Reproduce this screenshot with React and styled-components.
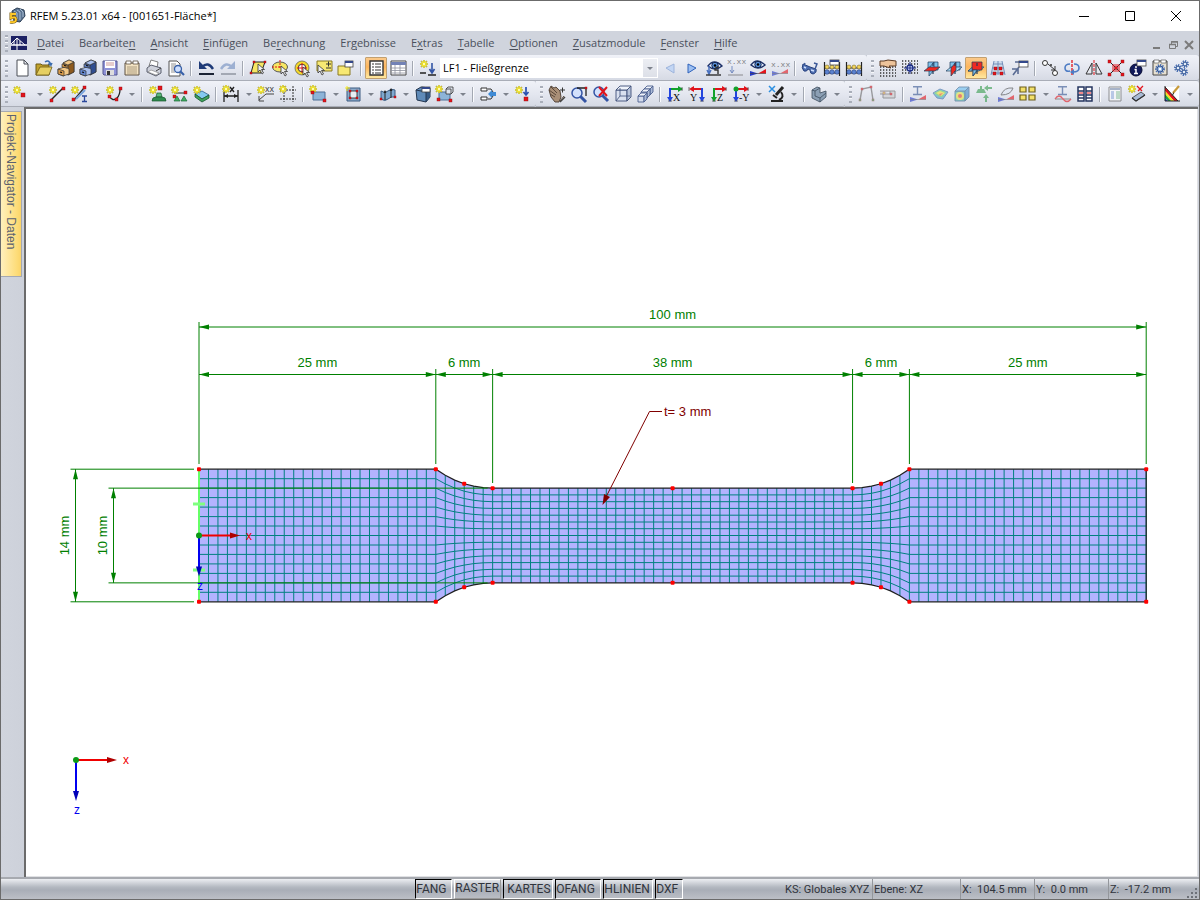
import React from 'react';
import styled, { createGlobalStyle } from 'styled-components';

const UI_FONT = '"Open Sans", "Noto Sans", sans-serif';
const DRAW_FONT = '"Liberation Sans", Arial, sans-serif';

const GlobalStyle = createGlobalStyle`
  * { box-sizing: border-box; }
  body { margin: 0; font-family: ${UI_FONT}; font-size: 11px; }
  button, select { font: inherit; color: inherit; margin: 0; }
`;

/* ---------- shell ---------- */

const Window = styled.div`
  display: flex;
  flex-direction: column;
  min-height: 100vh;
  border: 1px solid #6b6b6b;
  background: #d0d4dd;
  overflow: hidden;
`;

const TitleBar = styled.header`
  display: flex;
  align-items: center;
  height: 30px;
  padding-left: 8px;
  background: #fff;
  color: #000;
`;

const Title = styled.h1`
  flex: 1;
  margin: 0 0 0 5px;
  font-size: 11px;
  line-height: 16px;
  font-weight: 400;
`;

const CaptionButton = styled.button`
  display: grid;
  place-items: center;
  width: 46px;
  height: 30px;
  padding: 0;
  border: 0;
  background: none;
`;

const MenuBar = styled.nav`
  display: flex;
  align-items: center;
  height: 24px;
  padding: 0 2px 0 3px;
  background: #d0d4dd;
  color: #4a505c;
`;

const MenuList = styled.div`
  display: flex;
  flex: 1;
  margin-left: 3px;
`;

const MenuItem = styled.button`
  padding: 0 8px 0 7px;
  border: 0;
  background: none;
  line-height: 20px;
  white-space: nowrap;
  u { text-underline-offset: 2px; }
`;

const MdiButton = styled.button`
  display: grid;
  place-items: center;
  width: 16px;
  height: 20px;
  padding: 4px 0 0;
  border: 0;
  background: none;
`;

const Grip = styled.span`
  width: 3px;
  height: 17px;
  margin: 0 3px 0 1px;
  background: repeating-linear-gradient(#a9aeb9 0 2px, #f6f7fa 2px 3px, transparent 3px 5px);
`;

const ToolRow = styled.div`
  display: flex;
  height: 26px;
  background: #c6cad4;
`;

const ToolBar = styled.div`
  display: flex;
  align-items: center;
  flex: ${p => (p.$fill ? '1 0 auto' : '0 0 auto')};
  height: 26px;
  padding: 1px ${p => (p.$fill ? 0 : 2)}px 0 3px;
  background: linear-gradient(#f0f2f8, #e3e6ef 55%, #d6dae4);
  border-bottom: 1px solid #a9adb7;
  border-radius: 0 3px 3px 0;
`;

const ToolButton = styled.button`
  display: grid;
  place-items: center;
  width: 22px;
  height: 22px;
  padding: 0;
  border: 1px solid ${p => (p.$active ? '#c2a070' : 'transparent')};
  border-radius: 1px;
  background: ${p => (p.$active ? 'linear-gradient(#fbc98a, #fdb55c 45%, #ffe9a0)' : 'none')};
  opacity: ${p => (p.$dim ? 0.6 : 1)};
`;

const DropButton = styled.button`
  display: grid;
  place-items: center;
  width: 13px;
  height: 22px;
  padding: 0;
  border: 0;
  background: none;
`;

const Arrow = styled.span`
  border: 3px solid transparent;
  border-top-color: #7d828c;
  border-bottom: 0;
`;

const Separator = styled.span`
  width: 2px;
  height: 15px;
  margin: 0 3px;
  background: linear-gradient(90deg, #a3a8b2 50%, #fbfcfe 50%);
`;

const Combo = styled.label`
  display: flex;
  align-items: center;
  position: relative;
  width: 218px;
  height: 20px;
  margin: 0 1px;
  border: 1px solid #fff;
  background: #fff;
  color: #000;
`;

const ComboSelect = styled.select`
  flex: 1;
  height: 18px;
  padding: 0 2px 2px;
  border: 0;
  background: none;
  appearance: none;
`;

const ComboArrow = styled.span`
  position: absolute;
  right: 0;
  top: 0;
  display: grid;
  place-items: center;
  width: 14px;
  height: 18px;
  background: linear-gradient(#eceef3, #dde0e8);
  pointer-events: none;
`;

const Svg = styled.svg`
  display: block;
  overflow: visible;
  fill: none;
`;

const Main = styled.main`
  display: flex;
  flex: 1;
`;

const SideDock = styled.aside`
  width: 23px;
  padding-top: 4px;
  background: linear-gradient(90deg, #d0d4dd, #cdd1da);
`;

const SideTab = styled.button`
  width: 21px;
  height: 166px;
  padding: 2px 0 0;
  border: 1px solid #a5a9b2;
  border-left: 0;
  background: linear-gradient(90deg, #fff0bd, #fddc78 80%, #fbd468);
  color: #5b6170;
  font-family: ${DRAW_FONT};
  font-size: 12px;
  line-height: 18px;
  writing-mode: vertical-rl;
  text-align: left;
`;

const Canvas = styled.section`
  display: flex;
  flex: 1;
  border: solid #6b6b6b;
  border-width: 2px 0 0 2px;
  box-shadow: inset -1px -1px #e0e1e4;
  margin-right: 1px;
  background: #fff;
`;

const Drawing = styled.svg`
  flex: 1;
  width: 100%;
  font-family: ${DRAW_FONT};
  font-size: 13px;
`;

const StatusBar = styled.footer`
  display: flex;
  align-items: stretch;
  height: 22px;
  border-top: 2px solid #a7aab0;
  background: linear-gradient(#eceef2, #b4b9c1 40%, #a9aeb7 55%, #bcbfc6);
  color: #30343c;
  font-family: Roboto, sans-serif;
`;

const Spacer = styled.span`
  flex: ${p => p.$grow};
`;

const ModeButton = styled.button`
  width: ${p => p.$w}px;
  margin-right: 2px;
  padding: 0 0 ${p => (p.$pressed ? 0 : 2)}px ${p => (p.$center ? 1 : 0)}px;
  border: 1px solid;
  border-color: ${p => (p.$pressed ? '#000 #fff #fff #000' : '#fff #9a9a9a #9a9a9a #fff')};
  background: none;
  font-size: 12px;
  line-height: 17px;
  text-align: ${p => (p.$center ? 'center' : 'left')};
`;

const StatusCell = styled.span`
  width: ${p => p.$w}px;
  padding-left: 1px;
  border-right: 1px solid ${p => (p.$last ? 'transparent' : '#94979c')};
  font-size: 11px;
  line-height: 21px;
  white-space: pre;
`;

/* ---------- icon parts ---------- */

const Star = ({ x = 0, y = 0 }) => (
  <g transform={`translate(${x} ${y})`}>
    <path d="M4 0v8M0 4h8M1 1l6 6M7 1L1 7" stroke="#a39a3c" strokeWidth="1.5" />
    <path d="M4 0v8M0 4h8M1.5 1.5l5 5M6.5 1.5l-5 5" stroke="#f6e928" strokeWidth="1.1" />
    <rect x="3" y="3" width="2" height="2" fill="#fffbb0" />
  </g>
);
const Dot = ({ x, y, s = 3, c = '#e3141b' }) => (
  <rect x={x} y={y} width={s} height={s} fill={c} stroke="#8b0d12" strokeWidth=".4" />
);
const Pointer = ({ x = 0, y = 0 }) => (
  <path transform={`translate(${x} ${y})`} d="M0 0v8l2-2 2 4 1.5-1-2-3.5h3z" fill="#eee" stroke="#333" strokeWidth=".8" />
);
const Lens = ({ x = 5, y = 5, s = '#3454a4' }) => (
  <>
    <path d={`M${x + 3} ${y + 3}l6 6`} stroke={s} strokeWidth="3" />
    <circle cx={x} cy={y} r="5" fill="#cfe0ff" fillOpacity=".8" stroke={s} strokeWidth="1.5" />
  </>
);
const Cabinet = ({ a, b, c }) => (
  <g stroke="#333" strokeWidth=".7">
    <path d="M5 3l6-3 5 2v10l-6 3-5-2z" fill={a} />
    <path d="M10 5l6-3v10l-6 3z" fill={c} />
    <path d="M5 3l6-3 5 2-6 3z" fill={b} />
    <path d="M0 9l7-2 4 2v5l-6 2-5-2z" fill={b} />
    <path d="M0 9l6 2v5l-6-2zM4 4l5 1v3L4 7z" fill={a} />
    <path d="M2 12l2 .6M6 5.5l2 .4" stroke="#111" strokeWidth="1.2" />
  </g>
);
const Eye = ({ x = 0, y = 0 }) => (
  <g transform={`translate(${x} ${y})`}>
    <path d="M0 5q6-8 14 0-7 6-14 0z" fill="#e8f1ff" stroke="#1c2f66" strokeWidth="1.4" />
    <circle cx="7" cy="4.5" r="3.2" fill="#5b93dc" stroke="#14254f" />
    <circle cx="7" cy="4.5" r="1.3" fill="#000" />
  </g>
);
const Box = ({ x = 0, y = 0, s = 8, d = 4, f = '#7ea6cf', t = '#b7d2ec', r = '#45719f', k = '#2c4260' }) => (
  <g stroke={k} strokeWidth=".9" transform={`translate(${x} ${y})`}>
    <path d={`M0 ${d}h${s}v${s}h${-s}z`} fill={f} />
    <path d={`M0 ${d}l${d} ${-d}h${s}l${-d} ${d}z`} fill={t} />
    <path d={`M${s} ${d}l${d} ${-d}v${s}l${-d} ${d}z`} fill={r} />
  </g>
);
const Win = ({ x, y, w = 8, h = 6 }) => (
  <>
    <rect x={x} y={y} width={w} height={h} fill="#fff" stroke="#444" strokeWidth=".8" />
    <rect x={x} y={y} width={w} height="2" fill="#33488b" />
  </>
);
const Plus = ({ x, y }) => <path d={`M${x} ${y}h5M${x + 2.5} ${y - 2.5}v5`} stroke="#333" />;
const IBeam = ({ x = 3, y = 0, c = '#33538f' }) => (
  <path d={`M${x} ${y + .8}h9M${x + 4.5} ${y}v9M${x} ${y + 8.5}h9`} stroke={c} strokeWidth="1.4" />
);
const Axes = ({ flip, h, v, label }) => (
  <>
    <path d={flip ? 'M13 3H4' : 'M3 3h9'} stroke={h} strokeWidth="2" />
    <path d={flip ? 'M5 0L0 3l5 3z' : 'M11 0l5 3-5 3z'} fill={h} />
    <path d={flip ? 'M13 2v10' : 'M3 2v10'} stroke={v} strokeWidth="2" />
    <path d={flip ? 'M10 11h6l-3 5z' : 'M0 11h6l-3 5z'} fill={v} />
    <path d={flip ? 'M0 1v4M11 15h4' : 'M15 1v4M1 15h4'} stroke="#222" strokeWidth=".6" />
    <text x={flip ? 1 : 6} y="15" fontFamily="Liberation Serif, serif" fontSize="10" fill="#111">{label}</text>
  </>
);
const RED = '#ee2a22';
const Planes = ({ hot }) => {
  const flat = <path d="M0 11l5-4h11l-5 4z" fill={hot === 0 ? RED : '#a9dcf8'} />;
  const side = <path d="M5 8l5-6v8l-5 6z" fill={hot === 1 ? RED : '#7fc1ea'} />;
  const front = <path d="M4 2h10v8H4z" fill={hot === 2 ? RED : '#7fc1ea'} />;
  return (
    <g stroke="#1f3c5c" strokeWidth=".7">
      {hot === 2 ? <>{flat}{side}{front}</> : front}
      {hot === 0 && <>{side}{flat}</>}
      {hot === 1 && <>{flat}{side}</>}
      {hot === 2 && <path d="M0 11l4-3.5V11zM5 10h4l-4 6z" fill="#7fc1ea" />}
      <path d="M9 3v3M9 11v3" strokeWidth="1.2" />
    </g>
  );
};
const DotGrid = ({ y = 0 }) => (
  <path d={`M0 ${y + 1}h16M0 ${y + 4}h16M0 ${y + 7}h16M0 ${y + 10}h16M0 ${y + 13}h16`} stroke="#333" strokeWidth="1.3" strokeDasharray="1.3 1.7" />
);
const Gear = ({ x, y, r }) => (
  <>
    <circle cx={x} cy={y} r={r} stroke="#4d72b4" strokeWidth="2" strokeDasharray="1.3 1" />
    <circle cx={x} cy={y} r={r - 1} fill="#8fb2e0" stroke="#33538f" />
    <circle cx={x} cy={y} r={r / 3} fill="#fff" />
  </>
);
const Abacus = () => (
  <>
    <path d="M.5 2v14M15.5 2v14M0 8h15M0 13h15" stroke="#222" strokeWidth="1.2" />
    {[3, 8, 13].map(x => <circle key={x} cx={x} cy="7" r="2" fill="#f1d35a" stroke="#6b5a1d" strokeWidth=".5" />)}
    {[3, 8, 13].map(x => <circle key={x} cx={x} cy="12" r="2.3" fill="#5b82cf" stroke="#1d2f66" strokeWidth=".5" />)}
  </>
);
const Support = ({ x, y }) => <path d={`M${x} ${y}l3 5h-6z`} fill="#3fae62" stroke="#1d6b38" strokeWidth=".7" />;
const Values = ({ x = -1, y = 5 }) => (
  <text x={x} y={y} fontFamily="Liberation Mono, monospace" fontSize="8" fill="#333">x.xx</text>
);
const RedBlue = () => (
  <>
    <path d="M0 11v5l8-2.5z" fill="#2438c9" /><path d="M16 9v4.5H8z" fill="#e3141b" />
    <path d="M0 13.5h16" stroke="#444" strokeWidth=".6" />
  </>
);

const I = {
  new: <path d="M3 0h7l4 4v12H3zM10 0v4h4" fill="#fff" stroke="#4b4f57" />,
  open: <><path d="M9 2q4-3 6 3l1-2M15 5l-3-1" stroke="#3a6cae" strokeWidth="1.5" /><path d="M0 4h5l1 1h7v10H0z" fill="#c0a12c" stroke="#6d5b14" /><path d="M0 15l4-8h12l-3 8z" fill="#e6cf62" stroke="#6d5b14" strokeWidth=".8" /></>,
  cabA: <Cabinet a="#d99b4a" b="#f2c887" c="#8d5a1f" />,
  cabB: <Cabinet a="#6587cf" b="#a9c0ef" c="#304e91" />,
  save: <><path d="M1 1h14v14H2l-1-1z" fill="#8f93d8" stroke="#54568f" /><path d="M3 1h10v7H3z" fill="#fff" /><path d="M4 3h8M4 5h8" stroke="#c99" /><path d="M4 10h8v5H4z" fill="#ddd" /><path d="M5 11h3v4H5z" fill="#333" /></>,
  notes: <><path d="M1 3h14v12H1z" fill="#f3e3c3" stroke="#5d5142" /><path d="M2 1h5v3H2zM9 1h5v3H9z" fill="#fff" stroke="#5d5142" strokeWidth=".8" /><path d="M3 7h10M3 9h10M3 11h10M3 13h10" stroke="#9a8b70" strokeWidth=".8" /></>,
  print: <><path d="M3 6L5 0l7 2-1 6z" fill="#fff" stroke="#666" strokeWidth=".8" /><path d="M1 8l4-3 10 3v5l-5 3-9-4z" fill="#cfd2dc" stroke="#4d5160" strokeWidth=".9" /><path d="M2 12l3-2 8 3-3 2z" fill="#fff" stroke="#777" strokeWidth=".6" /><path d="M10 11l5-3" stroke="#444" /></>,
  preview: <><path d="M1 1h8l3 3v12H1z" fill="#fff" stroke="#555" /><path d="M3 4h5M3 6h6M3 8h4M3 10h3M3 12h4" stroke="#777" strokeWidth=".8" /><circle cx="10" cy="9" r="3.5" fill="#cfe0ff" stroke="#3860a8" strokeWidth="1.3" /><path d="M12 11l4 4" stroke="#3860a8" strokeWidth="2.2" /></>,
  undo: <><path d="M1 1v8h8z" fill="#1e3a78" /><path d="M4 7q6-6 11 2" stroke="#1e3a78" strokeWidth="2.4" /><path d="M1 14h15" stroke="#1b2334" strokeWidth="2" /></>,
  redo: <><path d="M15 1v8H7z" fill="#9db0d2" /><path d="M12 7Q6 1 1 9" stroke="#9db0d2" strokeWidth="2.4" /><path d="M1 14h15" stroke="#a3a8b3" strokeWidth="2" /></>,
  selPoly: <><path d="M4 2h11l-4 11H1z" fill="#f6e663" stroke="#222" /><Dot x="3" y="1" s={2} /><Dot x="14" y="1" s={2} /><Dot x="0" y="12" s={2} /><Pointer x={8} y={4} /></>,
  selEll: <><ellipse cx="8" cy="7" rx="7.5" ry="5" fill="#f6e663" stroke="#555" /><path d="M8 0v9M0 7h8" stroke="#e3141b" strokeDasharray="2 1" /><Pointer x={9} y={6} /></>,
  selRing: <><circle cx="8" cy="8" r="7" fill="#f4d82a" stroke="#555" strokeWidth=".7" /><circle cx="8" cy="8" r="3.8" fill="#fff" stroke="#333" /><path d="M8 3v10M3 8h10" stroke="#e3141b" /><Pointer x={9} y={7} /></>,
  selPlus: <><path d="M1 1h15v10H1z" fill="#f7e873" stroke="#8a7a22" /><Plus x={10} y={4} /><path d="M10 8h5" stroke="#333" /><Pointer x={2} y={5} /></>,
  selWin: <><path d="M0 6h12v9H0z" fill="#f7e873" stroke="#8a7a22" /><Win x={7} y={1} w={8} h={6} /></>,
  table: <><path d="M2 1h13v14H2z" fill="#fff" stroke="#333" strokeWidth="1.4" /><path d="M4 4h2M4 7h2M4 10h2M4 13h2M7 4h6M7 7h6M7 10h6M7 13h6" stroke="#333" /></>,
  grid: <><path d="M1 1h15v14H1z" fill="#fff" stroke="#444" /><path d="M1 2h15v3H1z" fill="#7382b5" /><path d="M1 8h15M1 10.5h15M1 13h15M5 5v10M10 5v10" stroke="#8d919d" strokeWidth=".8" /></>,
  loadNew: <><Star /><path d="M12 3v9M9.5 9l2.5 4 2.5-4" stroke="#3154a5" strokeWidth="1.6" /><path d="M0 13h6M8 15h8" stroke="#222" strokeWidth="1.6" /></>,
  prev: <path d="M12 4v9L4 8z" fill="#c3d6f4" stroke="#9db4dc" />,
  next: <path d="M4 4v9l8-5z" fill="#9dc0f2" stroke="#2f62bb" />,
  eyeLoad: <><Eye x={2} y={1} /><path d="M3 6v7M1 10l2 4 2-4" stroke="#4a72c0" strokeWidth="1.5" /><path d="M0 15h15" stroke="#222" strokeWidth="1.3" /><path d="M13 7q-4 0-4 3h3v4" stroke="#333" strokeWidth="1.4" /></>,
  valLoad: <><Values y={4} /><path d="M4 6v7M2 10l2 3 2-3" stroke="#3154a5" /><path d="M0 15h15" stroke="#555" /></>,
  eyeRes: <><RedBlue /><Eye x={1} /></>,
  valRes: <><RedBlue /><Values y={7} /></>,
  glasses: <><path d="M1 4q-2 4 1 7 3 1 4-2l2 1q0 4 3 4 4-1 3-5L8 7z" fill="#4d6db0" stroke="#26407c" /><path d="M2 5l1-2M13 9l2-5-3-1" stroke="#3b5898" strokeWidth="1.5" /><path d="M2 7l2 1M9 10l3 1" stroke="#cfe0ff" strokeWidth="1.4" /></>,
  abacusWin: <><Abacus /><Win x={6} y={0} w={9} h={5} /></>,
  abacus: <Abacus />,
  handGrid: <><DotGrid y={3} /><path d="M0 1h4l4-1 8 1v5H9l2 2-4-1-3-1H0z" fill="#edc39a" stroke="#5b3a24" /></>,
  snapGrid: <><DotGrid /><circle cx="8" cy="8" r="3" fill="#cfdcff" stroke="#1a2b84" strokeWidth="1.3" /><path d="M8 2v12M2 8h12" stroke="#1a2b84" /></>,
  plane0: <Planes hot={0} />,
  plane1: <Planes hot={1} />,
  plane2: <Planes hot={2} />,
  lattice: <><path d="M4 1h8l3 14H1z" fill="#cfdcec" /><path d="M4 1L1 15M8 1v14M12 1l3 14M3 4h10M2 8h12M1 13h14" stroke="#6b89b5" strokeWidth=".9" /><Dot x="4" y="7" /><Dot x="9" y="7" /><Dot x="3" y="12" /><Dot x="10" y="12" /></>,
  tag: <><path d="M1 15l6-8M0 9h6v5M3 2h5v5" stroke="#5a6c94" strokeWidth="1.6" /><Win x={7} y={1} w={9} h={6} /></>,
  move: <><circle cx="3" cy="3" r="2.5" stroke="#333" fill="#fff" /><circle cx="9" cy="5" r="1" fill="#333" /><path d="M6 4l7 6M13 6v4h-4" stroke="#333" /><circle cx="13" cy="13" r="2.5" stroke="#333" fill="#fff" /></>,
  rotate: <><path d="M8 0v16" stroke="#e3141b" strokeDasharray="3 1" strokeWidth="1.3" /><path d="M6 4Q1 4 1 8t5 3M10 4q5 0 5 4t-6 4" stroke="#4d7cc4" strokeWidth="1.6" /><path d="M10 9v6l-4-3z" fill="#4d7cc4" /></>,
  mirror: <><path d="M8 0v16" stroke="#e3141b" strokeDasharray="3 1" /><path d="M6 3v11H0zM10 3v11h6z" stroke="#333" fill="#e5e8ef" /></>,
  explode: <><path d="M1 1l14 14M15 1L1 15" stroke="#222" /><path d="M5 5h6v6H5z" stroke="#e3141b" /><Dot x="0" y="0" /><Dot x="13" y="0" /><Dot x="0" y="13" /><Dot x="13" y="13" /><Dot x="6.5" y="6.5" /></>,
  info: <><circle cx="6" cy="10" r="6" fill="#101a5b" stroke="#070b33" /><path d="M6 6v2M4.5 9.5H6V13M4 13.5h4" stroke="#fff" strokeWidth="1.5" /><Win x={7} y={0} w={9} h={6} /></>,
  options: <><path d="M1 1h14v14H1z" fill="#e8e1d1" stroke="#444" /><path d="M2 0h5v3H2zM9 0h5v3H9z" fill="#fff" stroke="#444" strokeWidth=".6" /><Gear x={8} y={9} r={4} /></>,
  gears: <><Gear x={4} y={8} r={3} /><Gear x={11} y={4} r={3} /><Gear x={10} y={12} r={3} /></>,

  nNode: <><Star x={-1} y={0} /><Dot x="7" y="7" s={4} /></>,
  nLine: <><path d="M2 14L14 2" stroke="#222" strokeWidth="1.4" /><Star /><Dot x="13" y="1" /><Dot x="1" y="13" /></>,
  nMember: <><path d="M3 14L13 2" stroke="#222" strokeWidth="1.2" /><path d="M5 13l9-9" stroke="#78a3dc" strokeWidth="2.2" /><Star /><Dot x="12" y="0" /><Dot x="1" y="12" /><path d="M11 10h5M13.5 10v6M11 15.5h5" stroke="#2b489b" strokeWidth="1.3" /></>,
  nArc: <><path d="M3 10q4 6 8 2 3-3 3-9" stroke="#222" strokeWidth="1.3" /><Star /><Dot x="13" y="1" /><Dot x="2" y="9" /><Dot x="9" y="12" /></>,
  nSupport: <><Star /><Dot x="9" y="0" s={4} /><path d="M8 7h4l1 4H7z" fill="#5cbb7c" stroke="#17562c" strokeWidth=".7" /><path d="M3 15q0-4 4-4h6q4 0 4 4z" fill="#2f8c4e" stroke="#17562c" strokeWidth=".7" /></>,
  nLSupport: <><path d="M3 7h11" stroke="#222" /><Star /><Dot x="13" y="5" /><Dot x="2" y="9" /><Support x={6} y={10} /><Support x={13} y={10} /></>,
  nSSupport: <><path d="M2 8l7-3 7 4-7 4z" fill="#84c9ef" stroke="#2f6187" strokeWidth=".8" /><path d="M2 8l7 5 7-4v3l-7 4-7-5z" fill="#3fa25c" stroke="#17562c" strokeWidth=".8" /><Star /></>,
  nDim: <><path d="M1 4v12M15 4v12M1 10h14" stroke="#222" strokeWidth="1.3" /><path d="M1 10l4-2v4zM15 10l-4-2v4z" fill="#222" /><path d="M7 1l4 5M11 1L7 6" stroke="#222" strokeWidth="1.4" /><Star x={-1} y={-1} /></>,
  nText: <><Star x={-1} /><text x="7" y="6" fontFamily="Liberation Sans, sans-serif" fontSize="9" fill="#444">xx</text><path d="M16 8H8l-7 6M1 10v5h5" stroke="#444" /></>,
  nRaster: <><path d="M4 0v16M13 0v16M0 4h16M0 13h16" stroke="#333" strokeDasharray="2 1" /><Star x={-1} y={-1} /></>,
  nSurf: <><path d="M3 6h12v8H3z" fill="#8db4d8" stroke="#4d6e95" /><Star x={-1} y={-1} /><Dot x="1" y="5" /><Dot x="13" y="13" /></>,
  nOpening: <><path d="M2 2h13v13H2z" fill="#8cadcd" stroke="#3c5b80" /><path d="M5 5h7v7H5z" fill="#e9edf5" stroke="#222" strokeWidth=".8" /><path d="M2 0v5M0 2h5" stroke="#f6e928" /><Dot x="4" y="4" s={2} /><Dot x="11" y="4" s={2} /><Dot x="4" y="11" s={2} /><Dot x="11" y="11" s={2} /></>,
  nShell: <><path d="M1 5q4 3 7 0t7-1v7q-4-1-7 2t-7 0z" fill="#7fa9d0" stroke="#3c5b80" /><path d="M5 5v9M11 3v9" stroke="#222" /><path d="M3.5 7L5 4l1.5 3M9.5 5L11 2l1.5 3" fill="#222" /><Dot x="0" y="12" s={2} /><Dot x="14" y="10" s={2} /></>,
  solidWin: <><path d="M1 4l5-3 9 1v9l-4 5-9-2z" fill="#5f8ab8" stroke="#22354f" /><path d="M11 6l4-4v9l-4 5z" fill="#365a85" /><path d="M1 4l10 2v10" stroke="#22354f" /><Win x={7} y={1} w={8} h={5} /></>,
  nSolid: <><path d="M2 6h11v8H2z" fill="#8db4d8" stroke="#4d6e95" /><path d="M9 3l2-2h5v5l-2 2M9 3h5v5H9z" fill="#dfe5ee" stroke="#333" strokeWidth=".8" /><Star x={-2} y={-1} /><Dot x="0" y="12" /><Dot x="12" y="13" /></>,
  link: <><path d="M1 2h6v3H1zM1 11h6v3H1z" fill="#fff" stroke="#333" /><path d="M8 3h3l2 3M8 13h3l2-3" stroke="#333" /><path d="M8 8l4-4v2h4v4h-4v2z" fill="#3f8ad4" /></>,
  nLoad: <><Star /><path d="M11 1v7M8.5 6l2.5 3 2.5-3" stroke="#2b51b0" strokeWidth="1.7" /><Dot x="9" y="11" s={4} /></>,
  hand: <><path d="M2 0l3 2 2-1 4 4 1 6-2 5H6L2 11 0 4z" fill="#a98f77" stroke="#4a3b30" strokeWidth=".9" /><path d="M2 1l6 6M0 4l7 5M1 8l5 3M11 15l4-5" stroke="#5b493a" /><Plus x={11} y={4} /><path d="M11 16l5-5" stroke="#444" strokeWidth="1.5" /></>,
  zoomWin: <><Lens x={6} y={7} /><path d="M6 2h9v8" stroke="#222" strokeWidth="1.3" /><Dot x="14" y="1" s={2} /></>,
  zoomAll: <><Lens x={6} y={6} /><path d="M6 1l8 9M14 1L6 10" stroke="#e3141b" strokeWidth="2" /></>,
  cube: <><Box x={1} y={0} s={11} d={4} f="#d9e0ef" t="#eff3fa" r="#b7c3da" k="#3e4f78" /><path d="M5 2v8l-4 5M5 10h10" stroke="#3e4f78" strokeWidth=".8" /></>,
  cubes: <><Box x={7} y={0} s={6} d={3} f="#d5dded" t="#eff3fa" r="#aab9d6" k="#4d6090" /><Box x={4} y={3} s={6} d={3} f="#d5dded" t="#eff3fa" r="#aab9d6" k="#4d6090" /><Box x={1} y={7} s={6} d={3} f="#d5dded" t="#eff3fa" r="#aab9d6" k="#4d6090" /></>,
  vX: <Axes h="#12a22b" v="#2244dd" label="X" />,
  vY: <Axes flip h="#e0131b" v="#2244dd" label="Y" />,
  vZ: <Axes h="#e0131b" v="#12a22b" label="Z" />,
  vmY: <><Axes h="#e0131b" v="#2244dd" label="-Y" /><circle cx="3" cy="3" r="2.5" fill="#12a22b" /></>,
  scope: <><path d="M15 1L8 9" stroke="#222" strokeWidth="3" /><path d="M13 6q4 5-2 8M5 9l4 3" stroke="#222" strokeWidth="2" /><path d="M3 15h12" stroke="#222" strokeWidth="2" /><path d="M1 0l6 6M7 0L1 6" stroke="#2c8fe0" strokeWidth="1.5" /></>,
  solid: <><path d="M1 4l5-3 3 1v5l6-2v6l-6 5-8-4z" fill="#8b9fb4" stroke="#3c4b5c" strokeWidth=".8" /><path d="M4 5v5l5 2 6-5M4 5l5-3M9 12v4M1 4l3 1" stroke="#3c4b5c" strokeWidth=".8" /></>,
  frame: <><path d="M2 14L4 3l9-2 2 13" stroke="#666" strokeWidth="1.4" /><Dot x="3" y="2" s={2} /><Dot x="12" y="0" s={2} /><Dot x="1" y="13" s={2} c="#3a5" /><Dot x="14" y="13" s={2} c="#3a5" /></>,
  release: <><path d="M0 5h10v3H0M3 8v4h12V5h-5" fill="#ccc" stroke="#666" /><Dot x="10" y="7" s={2} /><Dot x="3" y="6" s={2} c="#dd4" /></>,
  resBeam: <><RedBlue /><IBeam /></>,
  resSurf: <><path d="M1 7l7-4 8 3-5 7-6-1z" fill="#43a8c4" stroke="#3b6aa5" /><path d="M2 7l6-3 6 2-4 5-4-1z" fill="#5fd05a" /><path d="M4 7l4-2 5 2-4 3z" fill="#f3dc2f" /><path d="M7 8l4-1-3 3z" fill="#ea4b2a" /></>,
  resSolid: <><Box x={1} y={1} s={10} d={4} f="#4cc0a5" t="#67bdf0" r="#3b86c4" k="#2d5a85" /><circle cx="6" cy="10" r="4" fill="#e8e13a" /><circle cx="6" cy="10" r="2" fill="#ea3b2a" /></>,
  react: <><path d="M4 0h2v3h2l2 4H0l2-4h2z" fill="#349b4b" /><path d="M8 2l4-3v2h4v2h-4v2zM9 16v-4H7l3-4 3 4h-2v4z" fill="#349b4b" /></>,
  section: <><RedBlue /><path d="M3 9q3-8 12-7-2 7-12 7z" fill="#dfe7f4" stroke="#444" /></>,
  panels: <>{[[0, 1], [9, 1], [0, 9], [9, 9]].map(([x, y]) => <path key={`${x}${y}`} d={`M${x} ${y}h6v5h-6z`} fill="#f3e069" stroke="#6d5f1d" strokeWidth="1.2" />)}</>,
  beamWave: <><IBeam x={3} y={0} /><path d="M0 13h16" stroke="#555" /><path d="M0 13q4-6 8 0 4 5 8 0" stroke="#e3141b" strokeWidth="1.3" /></>,
  resTable: <><path d="M1 1h6v14H1zM9 1h6v14H9z" fill="#fff" stroke="#25345f" strokeWidth="1.5" /><path d="M1 5h6M1 9h6M1 12h6M9 5h6M9 9h6M9 12h6" stroke="#25345f" strokeWidth="1.3" /><path d="M2 7h4M10 7h4" stroke="#e3141b" /></>,
  report: <><path d="M2 1h12v14H2z" fill="#fff" stroke="#555" /><path d="M3 2h10v2H3z" fill="#7d8fae" /><path d="M4 6h3M4 8h3M4 10h3M4 12h3" stroke="#3b6ac4" /><path d="M9 6h4M9 8h4M9 10h4M9 12h4" stroke="#49a35b" /></>,
  wizard: <><path d="M3 12l9-6 4 3-9 6z" fill="#a9bbd6" stroke="#333" strokeWidth=".8" /><path d="M3 12l4 3 9-6" stroke="#333" strokeWidth="1.2" /><path d="M8 0l5 5M14 0L9 5" stroke="#e3141b" strokeWidth="1.3" /><Star x={-1} y={-1} /></>,
  colors: <><path d="M1 1h14v14H1z" fill="#fff" /><path d="M1 1l13 14h-4L1 5z" fill="#e3141b" /><path d="M1 5l9 10H7L1 8z" fill="#f4e11f" /><path d="M1 8l6 7H4l-3-3z" fill="#1aa83a" /><path d="M1 12l3 3H1z" fill="#1d3fd6" /><path d="M1 0v15h15M1 1l13 14" stroke="#222" /><path d="M15 0L9 7" stroke="#c79a3a" strokeWidth="2.2" /><path d="M10 6l-3 4 3-2z" fill="#333" /></>,
};

/* ---------- toolbars ---------- */

const T = (id, opt = {}) => ({ id, ...opt });
const SEP = { sep: true };
const drop = { drop: true };
const dim = { dim: true };

const row1 = [
  ['new', 'open', 'cabA', 'cabB', 'save', 'notes', 'print', 'preview', SEP, 'undo', 'redo', SEP, 'selPoly', 'selEll', 'selRing', 'selPlus', 'selWin', SEP,
    T('table', { active: true }), 'grid', SEP, 'loadNew', { combo: true }, 'prev', 'next', 'eyeLoad', T('valLoad', dim), 'eyeRes', T('valRes', dim), SEP, 'glasses', 'abacusWin', 'abacus'],
  ['handGrid', 'snapGrid', 'plane0', 'plane1', T('plane2', { active: true }), 'lattice', 'tag', SEP, 'move', 'rotate', 'mirror', 'explode', 'info', 'options', 'gears'],
];
const row2 = [
  [T('nNode', drop), 'nLine', T('nMember', drop), T('nArc', drop), SEP, 'nSupport', 'nLSupport', 'nSSupport', SEP, T('nDim', drop), 'nText', 'nRaster', SEP,
    T('nSurf', drop), T('nOpening', drop), T('nShell', drop), 'solidWin', T('nSolid', drop), SEP, T('link', drop), 'nLoad'],
  ['hand', 'zoomWin', 'zoomAll', 'cube', 'cubes', SEP, 'vX', 'vY', 'vZ', T('vmY', drop), T('scope', drop), SEP, T('solid', drop)],
  [T('frame', dim), T('release', dim), SEP, T('resBeam', dim), T('resSurf', dim), T('resSolid', dim), T('react', dim), T('section', dim), T('panels', drop),
    T('beamWave', dim), 'resTable', SEP, T('report', dim), T('wizard', drop), T('colors', drop)],
];

function Tool({ item }) {
  const it = typeof item === 'string' ? { id: item } : item;
  if (it.sep) return <Separator />;
  if (it.combo) {
    return (
      <Combo>
        <ComboSelect aria-label="Lastfall"><option>LF1 - Fließgrenze</option></ComboSelect>
        <ComboArrow><Arrow /></ComboArrow>
      </Combo>
    );
  }
  return (
    <>
      <ToolButton type="button" aria-label={it.id} $active={it.active} $dim={it.dim}>
        <Svg width="16" height="16" viewBox="0 0 16 16">{I[it.id]}</Svg>
      </ToolButton>
      {it.drop && <DropButton type="button" aria-label={`${it.id} Auswahl`}><Arrow /></DropButton>}
    </>
  );
}

const Bars = ({ bars }) => (
  <ToolRow>
    {bars.map((items, i) => (
      <ToolBar key={i} $fill={i === bars.length - 1}>
        <Grip />
        {items.map((item, k) => <Tool key={k} item={item} />)}
      </ToolBar>
    ))}
  </ToolRow>
);

/* ---------- model drawing ---------- */

const MM = 9.472;
const X0 = 199;
const YC = 535.5;
const GREEN = '#008000';
const px = mm => X0 + mm * MM;

// half height of the specimen at a position along its length
const halfHeight = mm => {
  const d = mm > 50 ? 100 - mm : mm;
  if (d <= 25) return 7;
  if (d >= 31) return 5;
  const u = (31 - d) / 6;
  return 5 + 2 * (0.85 * u * u + 0.15 * u * u * u);
};
const py = (mm, k) => YC + k * (halfHeight(mm) / 7) * MM;

const stations = Array.from({ length: 101 }, (_, i) => i);
const isoLine = k => 'M' + stations.map(s => `${px(s).toFixed(1)} ${py(s, k).toFixed(1)}`).join('L');
const outline = `${isoLine(-7)}L${stations.slice().reverse().map(s => `${px(s).toFixed(1)} ${py(s, 7).toFixed(1)}`).join('L')}Z`;

function HDim({ a, b, y, label }) {
  const x1 = px(a);
  const x2 = px(b);
  return (
    <g>
      <path d={`M${x1} ${y}H${x2}`} stroke={GREEN} />
      <path d={`M${x1} ${y}l10-2.5v5zM${x2} ${y}l-10-2.5v5z`} fill={GREEN} />
      <text x={(x1 + x2) / 2} y={y - 8} textAnchor="middle" fill={GREEN}>{label}</text>
    </g>
  );
}

function VDim({ half, x, end, label }) {
  const y1 = YC - half * MM;
  const y2 = YC + half * MM;
  return (
    <g>
      <path d={`M${x - 5} ${y1}H${end}M${x - 5} ${y2}H${end}M${x} ${y1}V${y2}`} stroke={GREEN} />
      <path d={`M${x} ${y1}l-2.5 10h5zM${x} ${y2}l-2.5-10h5z`} fill={GREEN} />
      <text transform={`translate(${x - 7} ${YC}) rotate(-90)`} textAnchor="middle" fill={GREEN}>{label}</text>
    </g>
  );
}

function AxisCross({ x, y }) {
  return (
    <g fontSize="12">
      <path d={`M${x} ${y}h32`} stroke="#f00000" strokeWidth="2" />
      <path d={`M${x + 41} ${y}l-10-3v6z`} fill="#b00000" />
      <path d={`M${x} ${y}v32`} stroke="#0000f0" strokeWidth="2" />
      <path d={`M${x} ${y + 41}l-3-10h6z`} fill="#0000b8" />
      <circle cx={x} cy={y} r="3" fill="#0c9a16" />
      <text x={x + 50} y={y + 4} textAnchor="middle" fill="#f00000">x</text>
      <text x={x + 1} y={y + 54} textAnchor="middle" fill="#0000f0">z</text>
    </g>
  );
}

function Model() {
  const nodes = [0, 25, 28, 31, 50, 69, 72, 75, 100];
  return (
    <Drawing viewBox="26 109 1172 768" fill="none" role="img" aria-label="Flächenmodell mit Bemaßung">
      <path d={outline} fill="#b3b3ff" />
      <path d={stations.map(s => `M${px(s)} ${py(s, -7)}V${py(s, 7)}`).join('')} stroke="#008080" />
      {Array.from({ length: 13 }, (_, i) => <path key={i} d={isoLine(i - 6)} stroke="#008080" />)}
      <path d={outline} stroke="#202020" strokeWidth="1.2" />
      <path d={`M${X0} ${py(0, -7)}V${py(0, 7)}`} stroke="#66ff66" strokeWidth="2" />
      <path d={`M${X0 - 6} 504h12M${X0 - 6} 570h12`} stroke="#80ff80" strokeWidth="3" />

      <path d={`M${px(0)} 322V464M${px(100)} 322V464M${px(25)} 369V464M${px(75)} 369V464M${px(31)} 369V483M${px(69)} 369V483`} stroke={GREEN} />
      <HDim a={0} b={100} y={327} label="100 mm" />
      <HDim a={0} b={25} y={374.5} label="25 mm" />
      <HDim a={25} b={31} y={374.5} label="6 mm" />
      <HDim a={31} b={69} y={374.5} label="38 mm" />
      <HDim a={69} b={75} y={374.5} label="6 mm" />
      <HDim a={75} b={100} y={374.5} label="25 mm" />
      <VDim half={7} x={75.5} end={194} label="14 mm" />
      <VDim half={5} x={113.5} end={px(31) - 5} label="10 mm" />

      <path d="M662 411.5H649.5L606 497" stroke="#800000" />
      <path d="M602.5 505l1.5-11 6 3z" fill="#800000" />
      <text x="664" y="416" fill="#800000">t= 3 mm</text>

      {nodes.map(n => [-7, 7].map(k => (
        <rect key={`${n}${k}`} x={px(n) - 2} y={py(n, k) - 2} width="4" height="4" rx="1" fill="#ff0000" />
      )))}
      <AxisCross x={X0} y={YC} />
      <AxisCross x={76} y={760} />
    </Drawing>
  );
}

/* ---------- page ---------- */

const menus = [['', 'D', 'atei'], ['Bearbeite', 'n', ''], ['', 'A', 'nsicht'], ['', 'E', 'infügen'], ['Be', 'r', 'echnung'], ['Er', 'g', 'ebnisse'],
  ['E', 'x', 'tras'], ['', 'T', 'abelle'], ['', 'O', 'ptionen'], ['', 'Z', 'usatzmodule'], ['', 'F', 'enster'], ['', 'H', 'ilfe']];

const modes = [['FANG', 37, 1], ['RASTER', 47, 0], ['KARTES', 50, 1, 1], ['OFANG', 46, 1], ['HLINIEN', 50, 1], ['DXF', 28, 1]];
const cells = [['KS: Globales XYZ', 89], ['Ebene: XZ', 88], ['X:  104.5 mm', 74], ['Y:  0.0 mm', 74], ['Z:  -17.2 mm', 76]];

export default function App() {
  return (
    <>
      <GlobalStyle />
      <Window>
        <TitleBar>
          <Svg width="16" height="16" viewBox="0 0 16 16">
            <path d="M3 3l5-3 7 2 1 6-5 6-6-1z" fill="#5a7391" stroke="#2c3e55" />
            <path d="M5 3l3 2v6M8 2l3 2v8M11 1l3 3v5" stroke="#a9bdd2" />
            <path d="M7 6H2v4q5-2 5 1.5T1 14" stroke="#7d5f10" strokeWidth="3" />
            <path d="M7 6H2v4q5-2 5 1.5T1 14" stroke="#ffc928" strokeWidth="1.8" />
          </Svg>
          <Title>RFEM 5.23.01 x64 - [001651-Fläche*]</Title>
          <CaptionButton type="button" aria-label="Minimieren"><Svg width="10" height="10"><path d="M0 5.5h10" stroke="#000" /></Svg></CaptionButton>
          <CaptionButton type="button" aria-label="Maximieren"><Svg width="10" height="10"><path d="M.5.5h9v9h-9z" stroke="#000" /></Svg></CaptionButton>
          <CaptionButton type="button" aria-label="Schließen"><Svg width="10" height="10"><path d="M0 0l10 10M10 0L0 10" stroke="#000" /></Svg></CaptionButton>
        </TitleBar>

        <MenuBar>
          <Grip />
          <Svg width="16" height="14" viewBox="0 0 16 14">
            <path d="M0 0h16v14H0z" fill="#1c2163" />
            <path d="M0 9h16" stroke="#fff" strokeWidth="1.5" />
            <path d="M6 2v12M0 8l6-6 8 7M9 5v4M3 5v4" stroke="#fff" />
          </Svg>
          <MenuList>
            {menus.map(([a, u, b]) => <MenuItem key={a + u + b} type="button">{a}<u>{u}</u>{b}</MenuItem>)}
          </MenuList>
          <MdiButton type="button" aria-label="Dokument minimieren"><Svg width="8" height="8"><path d="M0 7h7" stroke="#7b7b7b" strokeWidth="2" /></Svg></MdiButton>
          <MdiButton type="button" aria-label="Dokument wiederherstellen"><Svg width="9" height="8"><path d="M2.5 3V.5h6v5H7M.5 3.5h6v4h-6z" stroke="#7b7b7b" /><path d="M2 1h7M0 3.5h7" stroke="#7b7b7b" strokeWidth="1.5" /></Svg></MdiButton>
          <MdiButton type="button" aria-label="Dokument schließen"><Svg width="8" height="8"><path d="M0 0l8 8M8 0L0 8" stroke="#7b7b7b" strokeWidth="2" /></Svg></MdiButton>
        </MenuBar>

        <Bars bars={row1} />
        <Bars bars={row2} />

        <Main>
          <SideDock><SideTab type="button">Projekt-Navigator - Daten</SideTab></SideDock>
          <Canvas><Model /></Canvas>
        </Main>

        <StatusBar>
          <Spacer $grow={21} />
          {modes.map(([label, w, pressed, center]) => (
            <ModeButton key={label} type="button" $w={w} $pressed={pressed} $center={center}>{label}</ModeButton>
          ))}
          <Spacer $grow={5} />
          {cells.map(([label, w], i) => <StatusCell key={label} $w={w} $last={i === cells.length - 1}>{label}</StatusCell>)}
          <Svg width="14" height="20" viewBox="0 0 14 20">
            <path d="M10 9h2v2h-2zM6 13h2v2H6zM10 13h2v2h-2zM2 17h2v2H2zM6 17h2v2H6zM10 17h2v2h-2z" fill="#6d7178" />
          </Svg>
        </StatusBar>
      </Window>
    </>
  );
}
